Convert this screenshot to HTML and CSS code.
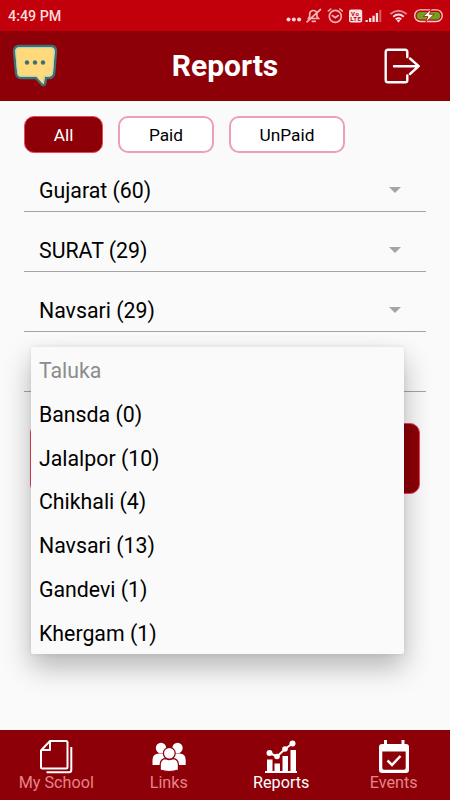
FILE: index.html
```html
<!DOCTYPE html>
<html lang="en">

	<head>
		<meta charset="UTF-8">
		<title>Reports</title>
		<link rel="stylesheet" href="styles.css">
	</head>

	<body>
		<div class="status">
			<span class="time">4:49 PM</span>
			<svg class="status-icons" width="166" height="31" viewBox="0 0 166 31">
				<!-- more -->
				<g fill="#ffd5d5">
					<circle cx="4.500" cy="19.600" r="2" />
					<circle cx="9.800" cy="19.600" r="2" />
					<circle cx="15.100" cy="19.600" r="2" />
				</g>
				<!-- bell off -->
				<g fill="none" stroke="#f3b5b5" stroke-width="1.700" stroke-linecap="round">
					<path d="M24.500 18.500h10l-1.600-2v-3q-.6-3-3.600-3t-3.600 3v3zM28.300 21.300h3M36.500 9.500L23 21.800" />
				</g>
				<!-- alarm -->
				<g fill="none" stroke="#f3b5b5" stroke-width="1.600" stroke-linecap="round">
					<circle cx="51.300" cy="16.400" r="6" />
					<path d="M48.300 15.500l3 2.200 3-2.200M44.300 11l2.500-2M58.300 11l-2.500-2" />
				</g>
				<!-- volte -->
				<rect x="65" y="9.500" width="13.200" height="13" rx="2" fill="#ffe0e0" />
				<text x="67" y="15.600" class="volte" textLength="8">Vo</text>
				<text x="66.300" y="21.400" class="volte" textLength="10.500">LTE</text>
				<!-- signal -->
				<g fill="#ffe0e0">
					<rect x="81.500" y="20" width="2.300" height="2" />
					<rect x="85" y="18" width="2.300" height="4" />
					<rect x="88.400" y="15.700" width="2.300" height="6.300" />
					<rect x="91.800" y="13" width="2.300" height="9" />
					<rect x="95.300" y="9.800" width="2" height="12.200" opacity=".4" />
				</g>
				<!-- wifi -->
				<g fill="none" stroke="#ffe0e0" stroke-width="1.900">
					<path d="M106.300 14q8.200-6.600 16.400 0" opacity=".6" />
					<path d="M109.200 16.700q5.300-4.200 10.600 0" />
					<path d="M111.700 19.300q2.800-2.200 5.600 0" />
				</g>
				<path d="M112.600 20.400q1.900-1.200 3.800 0l-1.900 2.200z" fill="#ffe0e0" />
				<!-- battery -->
				<rect x="130.700" y="9.900" width="27.500" height="11.600" rx="5.600" fill="#c1000b" stroke="#ffc9c9" stroke-width="1.400" />
				<rect x="132.700" y="11.900" width="23.500" height="7.600" rx="3.800" fill="#67a51d" />
				<path d="M147.200 9l-8 7.500h4.700l-2.200 6 8.400-8.200h-4.700z" fill="#fff" stroke="#c1000b" stroke-width=".8" />
			</svg>
		</div>
		<div class="header">
			<svg class="chat" width="46" height="44" viewBox="0 0 46 44">
				<path d="M7 2h32q5 0 5 5l-1.800 22q-.7 5-5.200 5h-3l-.7 5.500q-1.300 3.300-3.800.7l-5.700-6.200H9q-4.500 0-5-5L2 7q0-5 5-5z" fill="#ffd97b" stroke="#3f7173" stroke-width="2.400" />
				<path d="M26 32.200H9q-3 0-3.400-3.300L3.700 7q0-3.300 3.300-3.300h32q3.300 0 3.300 3.300l-1.800 21.900q-.5 3.300-3.500 3.300h-4.700l-1 6.300" fill="none" stroke="#a5dccb" stroke-width="1" />
				<g fill="#3f7173">
					<circle cx="15" cy="18.500" r="2.200" />
					<circle cx="23" cy="18.500" r="2.200" />
					<circle cx="31" cy="18.500" r="2.200" />
				</g>
			</svg>
			<h1>Reports</h1>
			<svg class="logout" width="36" height="36" viewBox="0 0 36 36" fill="none" stroke="#fff" stroke-width="2.400" stroke-linecap="round" stroke-linejoin="round">
				<path d="M23.300 9V3.800Q23.300 1.700 21.200 1.700H4Q1.700 1.700 1.700 4V32Q1.700 34.300 4 34.300H21.200Q23.300 34.300 23.300 32.200V27.500" />
				<path d="M10 18.200H34.500M26 10.500L34.700 18.200L26 26" />
			</svg>
		</div>
		<div class="content">
			<div class="tabs">
				<button class="tab all active">All</button>
				<button class="tab paid">Paid</button>
				<button class="tab unpaid">UnPaid</button>
			</div>
			<div class="select">Gujarat (60)<span class="arrow"></span></div>
			<div class="select">SURAT (29)<span class="arrow"></span></div>
			<div class="select">Navsari (29)<span class="arrow"></span></div>
			<div class="select">
				<!-- opened list -->
				<ul class="menu">
					<li class="hint">Taluka</li>
					<li>Bansda (0)</li>
					<li>Jalalpor (10)</li>
					<li>Chikhali (4)</li>
					<li>Navsari (13)</li>
					<li>Gandevi (1)</li>
					<li>Khergam (1)</li>
				</ul>
			</div>
			<div class="submit"></div>
		</div>
		<div class="nav">
			<a class="item">
				<svg width="34" height="34" viewBox="0 0 34 34" fill="none" stroke="#fff" stroke-width="2" stroke-linejoin="round">
					<path d="M11 1H27Q28.500 1 28.500 2.500V27Q28.500 28.500 27 28.500H3.500Q2 28.500 2 27V10.500z" />
					<path d="M11 1.500V10H2.500" />
					<path d="M32.300 7V30Q32.300 32.200 30 32.200H7.500" />
				</svg>
				<span>My School</span>
			</a>
			<a class="item">
				<svg width="34" height="34" viewBox="0 0 34 34" fill="#fff">
					<circle cx="9" cy="8" r="5.200" />
					<circle cx="25.500" cy="8" r="5.200" />
					<path d="M.5 25V20Q.5 13.500 7 13.500H11Q15 13.500 16 18V25z" />
					<path d="M33.700 25V20Q33.700 13.500 27.500 13.500H23.500Q19 13.500 18 18V25z" />
					<g stroke="#8d0008" stroke-width="1.200">
						<circle cx="17.300" cy="13.300" r="5.900" />
						<path d="M8.200 30V25Q8.200 18.700 14 18.700Q17.300 20.700 20.500 18.700Q26.400 18.700 26.400 25V30Q17.300 33 8.200 30z" />
					</g>
				</svg>
				<span>Links</span>
			</a>
			<a class="item current">
				<svg width="34" height="34" viewBox="0 0 34 34" fill="#fff">
					<path d="M3 19.500H8.500V31H3zM10.500 23.500H16V31H10.500zM18.500 16H24V31H18.500zM26.500 10H32V31H26.500zM1 31H33V33H1z" />
					<path d="M5.500 13L13 16.500L21 9L28.500 3.500" fill="none" stroke="#fff" stroke-width="2" />
					<circle cx="5.500" cy="13" r="3" />
					<circle cx="13" cy="16.500" r="2.800" />
					<circle cx="21" cy="9" r="2.800" />
					<circle cx="28.500" cy="3.500" r="3" />
				</svg>
				<span>Reports</span>
			</a>
			<a class="item">
				<svg width="34" height="34" viewBox="0 0 34 34">
					<path d="M7 0H10V4H24.500V0H27.500V4H29Q32 4 32 7V30Q32 33 29 33H5Q2 33 2 30V7Q2 4 5 4H7z" fill="#fff" />
					<path d="M5.300 11.500H28.700V28Q28.700 29.700 27 29.700H7Q5.300 29.700 5.300 28z" fill="#8d0008" />
					<path d="M10.500 20.500L15 25L23.500 16" fill="none" stroke="#fff" stroke-width="2.500" />
				</svg>
				<span>Events</span>
			</a>
		</div>
	</body>

</html>
```
FILE: styles.css
```css
* {
	margin: 0;
	padding: 0;
	box-sizing: border-box;
}

body {
	width: 450px;
	height: 800px;
	overflow: hidden;
	display: flex;
	flex-direction: column;
	background: #fafafa;
	font-family: Roboto, "Liberation Sans", sans-serif;
	color: #000;
}

.status {
	height: 31px;
	display: flex;
	justify-content: space-between;
	background: #c1000b;
}

.status .time {
	padding-left: 8px;
	line-height: 32px;
	font-size: 14.3px;
	font-weight: 500;
	color: #ffdcdc;
}

.volte {
	font-size: 6px;
	font-weight: 700;
	fill: #b3000b;
}

.header {
	height: 70px;
	padding: 0 30px 0 12px;
	display: flex;
	align-items: center;
	justify-content: space-between;
	background: #8d0008;
}

.header h1 {
	margin-left: 18px;
	font-size: 30px;
	line-height: 74px;
	color: #fff;
}

.header .chat {
	margin-right: -10px;
}

.content {
	flex: 1;
	padding: 15px 24px 0;
}

.tabs {
	display: flex;
	gap: 15px;
}

.tab {
	height: 37px;
	border: 2px solid #eda0b2;
	border-radius: 10px;
	background: #fff;
	font-family: inherit;
	font-size: 17.3px;
	color: #000;
}

.tab.active {
	background: #8d0008;
	border: 1px solid #e8475c;
	color: #fff;
}

.all {
	width: 79px;
}

.paid {
	width: 96px;
}

.unpaid {
	width: 116px;
}

.select {
	position: relative;
	height: 60px;
	padding: 17px 25px 0 15px;
	display: flex;
	align-items: center;
	justify-content: space-between;
	border-bottom: 1px solid #a4a4a4;
	font-size: 21.3px;
}

.tabs + .select {
	height: 59px;
	padding-top: 16px;
}

.arrow {
	border: 6px solid transparent;
	border-top-color: #a4a4a4;
	border-bottom: 0;
}

.menu {
	position: absolute;
	left: 7px;
	top: 15px;
	z-index: 1;
	width: 373px;
	height: 307px;
	border-radius: 2px;
	background: #fafafa;
	box-shadow: 0 13px 28px rgba(0, 0, 0, .28), 0 0 5px rgba(0, 0, 0, .08);
	list-style: none;
}

.menu li {
	height: 43.8px;
	padding-left: 8px;
	line-height: 47px;
}

.menu .hint {
	color: #8c8c8c;
}

.submit {
	height: 71px;
	margin: 31px 6px 0;
	border: 1px solid #e8475c;
	border-radius: 10px;
	background: #8d0008;
}

.nav {
	height: 70px;
	display: flex;
	background: #8d0008;
}

.nav .item {
	flex: 1;
	padding-top: 10px;
	display: flex;
	flex-direction: column;
	align-items: center;
	font-size: 16.2px;
	line-height: 17px;
	color: #e58488;
}

.nav .current {
	color: #fff;
}
```
